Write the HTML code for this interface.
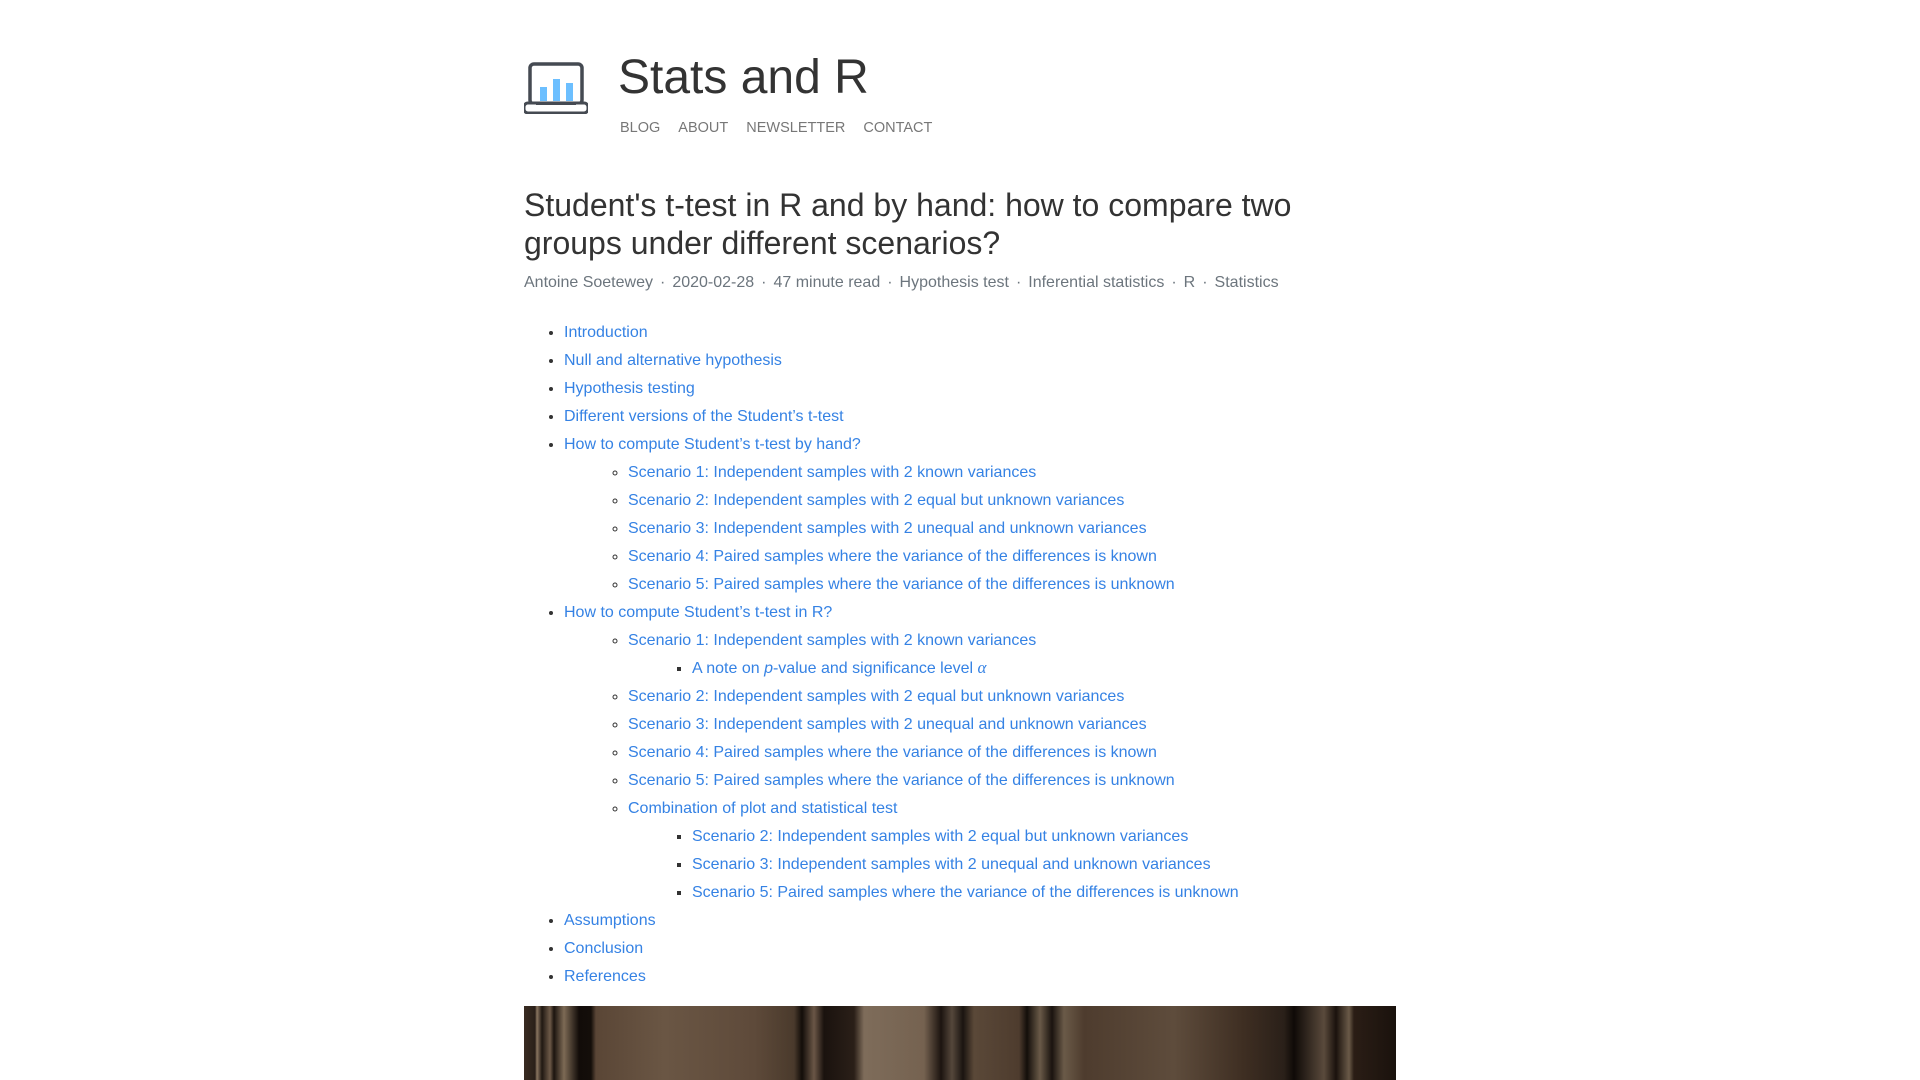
<!DOCTYPE html>
<html><head><meta charset="utf-8"><style>
body{margin:0;background:#fff;font-family:"Liberation Sans",Arial,sans-serif;}
.wrap{position:relative;width:1920px;height:1080px;overflow:hidden;}
.logo{position:absolute;left:524px;top:62px;}
.site{position:absolute;left:618px;top:48px;font-size:48px;color:#333;line-height:60px;margin:0;font-weight:normal;}
.nav{position:absolute;left:620px;top:120px;font-size:14.5px;color:#777;}
.nav span{margin-right:18px;}
h1{position:absolute;left:524px;top:186px;margin:0;font-size:32px;font-weight:normal;line-height:38px;color:#333;width:860px;}
.meta{position:absolute;left:524px;top:274px;font-size:16px;color:#6c757d;}
.meta b{font-weight:normal;margin:0 7px;}
ul.toc{position:absolute;left:524px;top:319px;margin:0;padding-left:40px;font-size:16px;line-height:28px;}
ul.toc ul{padding-left:24px;margin:0;list-style:circle;margin-left:40px;}
ul.toc ul ul{list-style:square;}
ul.toc li{color:#333;height:auto;}
a{color:#3582e4;text-decoration:none;}
.al{font-family:'Liberation Serif',serif;font-size:17px;line-height:0;}
.img{position:absolute;left:524px;top:1006px;width:872px;height:80px;
background:linear-gradient(90deg,#3a2c22 0,#2a2019 11px,#8a7560 13px,#201812 18px,#6e5a48 26px,#1c140f 30px,#7d6a55 40px,#120c09 55px,#140e0a 67px,#5a4636 72px,#6a5644 140px,#5e4a3a 230px,#4a3a2c 270px,#120d09 278px,#6a5646 290px,#1a120e 300px,#2a1f18 330px,#7e6c5a 340px,#756250 400px,#1c1410 417px,#55473b 428px,#1a1410 439px,#5a4838 450px,#4e3c2e 495px,#130e0a 503px,#6a5a48 516px,#1a130f 528px,#6a5a48 540px,#4e3c2e 560px,#5e4c3c 650px,#3e2e22 720px,#2a2019 760px,#0f0a07 770px,#5a4a3c 800px,#1a120d 812px,#6a5a48 825px,#2a1d15 830px,#1a120d 872px);}
</style></head><body><div class="wrap">
<svg class="logo" width="64" height="52" viewBox="0 0 64 52">
<rect x="6" y="2" width="52" height="40" rx="4" fill="none" stroke="#454a52" stroke-width="3.5"/>
<rect x="0" y="41" width="64" height="10" rx="4" fill="#fff" stroke="#454a52" stroke-width="3"/>
<rect x="16" y="25" width="7" height="14" fill="#6cbfff"/>
<rect x="29" y="17" width="7" height="22" fill="#6cbfff"/>
<rect x="42" y="21" width="7" height="18" fill="#6cbfff"/>
<rect x="12" y="40" width="14" height="3" fill="#454a52"/><rect x="25" y="40" width="14" height="3" fill="#454a52"/><rect x="38" y="40" width="14" height="3" fill="#454a52"/>
</svg>
<div class="site">Stats and R</div>
<div class="nav"><span>BLOG</span><span>ABOUT</span><span>NEWSLETTER</span><span>CONTACT</span></div>
<h1>Student's t-test in R and by hand: how to compare two groups under different scenarios?</h1>
<div class="meta">Antoine Soetewey<b>·</b>2020-02-28<b>·</b>47 minute read<b>·</b>Hypothesis test<b>·</b>Inferential statistics<b>·</b>R<b>·</b>Statistics</div>
<ul class="toc">
<li><a>Introduction</a></li>
<li><a>Null and alternative hypothesis</a></li>
<li><a>Hypothesis testing</a></li>
<li><a>Different versions of the Student’s t-test</a></li>
<li><a>How to compute Student’s t-test by hand?</a>
<ul>
<li><a>Scenario 1: Independent samples with 2 known variances</a></li>
<li><a>Scenario 2: Independent samples with 2 equal but unknown variances</a></li>
<li><a>Scenario 3: Independent samples with 2 unequal and unknown variances</a></li>
<li><a>Scenario 4: Paired samples where the variance of the differences is known</a></li>
<li><a>Scenario 5: Paired samples where the variance of the differences is unknown</a></li>
</ul></li>
<li><a>How to compute Student’s t-test in R?</a>
<ul>
<li><a>Scenario 1: Independent samples with 2 known variances</a>
<ul><li><a>A note on <i>p</i>-value and significance level <i class="al">α</i></a></li></ul></li>
<li><a>Scenario 2: Independent samples with 2 equal but unknown variances</a></li>
<li><a>Scenario 3: Independent samples with 2 unequal and unknown variances</a></li>
<li><a>Scenario 4: Paired samples where the variance of the differences is known</a></li>
<li><a>Scenario 5: Paired samples where the variance of the differences is unknown</a></li>
<li><a>Combination of plot and statistical test</a>
<ul>
<li><a>Scenario 2: Independent samples with 2 equal but unknown variances</a></li>
<li><a>Scenario 3: Independent samples with 2 unequal and unknown variances</a></li>
<li><a>Scenario 5: Paired samples where the variance of the differences is unknown</a></li>
</ul></li>
</ul></li>
<li><a>Assumptions</a></li>
<li><a>Conclusion</a></li>
<li><a>References</a></li>
</ul>
<div class="img"></div>
</div></body></html>
